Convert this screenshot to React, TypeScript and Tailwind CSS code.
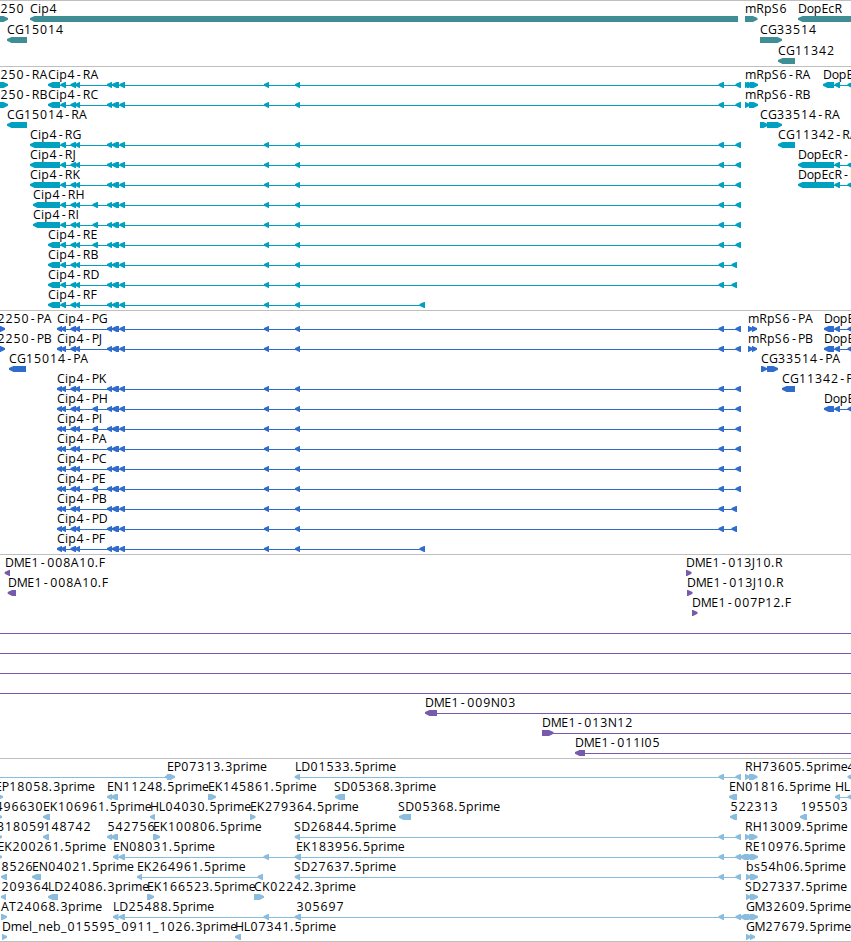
import React from 'react';

type Block = [start: number, end: number, dir?: 'l' | 'r'];

interface Feature {
  label?: string;
  x: number;
  blocks?: Block[];
  line?: [number, number];
}

interface Track {
  name: string;
  color: string;
  laneHeight: number;
  padding: string;
  lanes: Feature[][];
}

// Advance widths of the label face, in pixels (digits are 8)
const ADVANCES: Record<string, number> = {
  '-': 7.8, '.': 4, _: 6,
  A: 8, B: 7.5, C: 8, D: 8.7, E: 6.7, F: 6.5, G: 8.5, H: 8.7, I: 3.3, J: 3.3, K: 7.7,
  L: 6.3, M: 10.5, N: 9, P: 7, R: 7.7, S: 7.3, T: 7,
  b: 8, c: 6.3, e: 7, h: 7.7, i: 3.2, l: 3.2, m: 11.3, n: 7.7, o: 7, p: 7.8, r: 5, s: 6,
};

const glyphPositions = (text: string, x: number) => {
  let pen = x;
  return [...text]
    .map((ch) => {
      const inset = /\d/.test(ch) ? 0.5 : ch === '-' ? 1.8 : 0;
      const position = pen + inset;
      pen += ADVANCES[ch] ?? 8;
      return position.toFixed(1);
    })
    .join(' ');
};

const exons = (first: Block[], extra = false, end = 741): Block[] => [
  ...first,
  [70.5, 76],
  [75, 80],
  ...((extra ? [[92.5, 98]] : []) as Block[]),
  [107, 112],
  [112, 119],
  [119.5, 125],
  [264, 269],
  [295, 300],
  ...((end > 500 ? [[718.5, 724], [end - 5.5, end]] : [[end - 5.5, end]]) as Block[]),
];

const transcript = (label: string, x: number, extra = false, end = 741): Feature => ({
  label,
  x,
  blocks: exons([[x, 60], [60.5, 66]], extra, end),
  line: [60, end],
});

const protein = (label: string, extra = false, end = 741): Feature => ({
  label,
  x: 57,
  blocks: exons([[57, 62], [61, 66]], extra, end),
  line: [60, end],
});

const dopEcR = (label: string, x: number): Feature => ({
  label,
  x,
  blocks: [[x, 834], [834.5, 840], [847.5, 854]],
  line: [834, 851],
});

const one = (label: string, x: number, start: number, end: number, dir: 'l' | 'r' = 'l'): Feature => ({
  label,
  x,
  blocks: [[start, end, dir]],
});

const span = (label: string, x: number): Feature => ({
  label,
  x,
  blocks: [[294.7, 300], [718.5, 724], [735.5, 741]],
  line: [297, 741],
});

const pair = (label: string, x: number, start = x, end = 757.5): Feature => ({
  label,
  x,
  blocks: [[start, start + 5, 'r'], [start + 4, end, 'r']],
});

const spliced = (label: string, x: number): Feature => ({
  label,
  x,
  blocks: [
    [113, 118.5], [119, 125], [263.5, 269], [294.7, 301], [718.5, 724],
    [735.5, 741], [740, 747], [745, 753, 'r'], [750, 758, 'r'],
  ],
  line: [116, 745],
});

const fullLine: Feature = { x: 0, line: [0, 851] };

const tracks: Track[] = [
  {
    name: 'genes',
    color: '#3f8e95',
    laneHeight: 21,
    padding: 'pb-[2px]',
    lanes: [
      [
        one('250', 0, -12, 8, 'r'),
        one('Cip4', 30, 30, 738),
        one('mRpS6', 745, 745, 757.5, 'r'),
        one('DopEcR', 798, 798, 860),
      ],
      [one('CG15014', 7, 7, 27), one('CG33514', 760, 760, 782, 'r')],
      [one('CG11342', 778, 778, 795)],
    ],
  },
  {
    name: 'transcripts',
    color: '#00a0c0',
    laneHeight: 20,
    padding: 'pb-[3px]',
    lanes: [
      [
        one('250-RA', 0, -12, 8, 'r'),
        transcript('Cip4-RA', 48),
        { label: 'mRpS6-RA', x: 745, blocks: [[745, 750, 'r'], [747, 753, 'r'], [750, 758, 'r']] },
        dopEcR('DopEcR-RA', 823),
      ],
      [
        one('250-RB', 0, -12, 8, 'r'),
        transcript('Cip4-RC', 48),
        pair('mRpS6-RB', 745, 745, 758),
      ],
      [
        one('CG15014-RA', 7, 7, 27),
        { label: 'CG33514-RA', x: 760, blocks: [[760, 768, 'r'], [767, 782, 'r']] },
      ],
      [transcript('Cip4-RG', 30), one('CG11342-RA', 778, 778, 795)],
      [transcript('Cip4-RJ', 30), dopEcR('DopEcR-RB', 798)],
      [transcript('Cip4-RK', 30), dopEcR('DopEcR-RC', 798)],
      [transcript('Cip4-RH', 33, true)],
      [transcript('Cip4-RI', 33, true)],
      [transcript('Cip4-RE', 48, true)],
      [transcript('Cip4-RB', 48, false, 737)],
      [transcript('Cip4-RD', 48, false, 737)],
      [transcript('Cip4-RF', 48, false, 425)],
    ],
  },
  {
    name: 'proteins',
    color: '#306ccc',
    laneHeight: 20,
    padding: 'pb-[3px]',
    lanes: [
      [
        one('2250-PA', -3, -12, 5, 'r'),
        protein('Cip4-PG'),
        pair('mRpS6-PA', 748, 748, 757),
        dopEcR('DopEcR-PA', 824),
      ],
      [
        one('2250-PB', -3, -12, 5, 'r'),
        protein('Cip4-PJ'),
        pair('mRpS6-PB', 748, 748, 757),
        dopEcR('DopEcR-PB', 824),
      ],
      [
        one('CG15014-PA', 9, 9, 26),
        { label: 'CG33514-PA', x: 761, blocks: [[761, 767, 'r'], [767, 778, 'r']] },
      ],
      [protein('Cip4-PK'), one('CG11342-PA', 782, 782, 795)],
      [protein('Cip4-PH', true), dopEcR('DopEcR-PC', 824)],
      [protein('Cip4-PI', true)],
      [protein('Cip4-PA')],
      [protein('Cip4-PC')],
      [protein('Cip4-PE', true)],
      [protein('Cip4-PB', false, 737)],
      [protein('Cip4-PD', false, 737)],
      [protein('Cip4-PF', false, 425)],
    ],
  },
  {
    name: 'clones',
    color: '#775aaa',
    laneHeight: 20,
    padding: 'pb-[3px]',
    lanes: [
      [one('DME1-008A10.F', 5, 4.7, 10), one('DME1-013J10.R', 686, 686, 691.5, 'r')],
      [one('DME1-008A10.F', 8, 7.7, 16), one('DME1-013J10.R', 687, 687, 692.5, 'r')],
      [one('DME1-007P12.F', 692, 692, 697.5, 'r')],
      [fullLine],
      [fullLine],
      [fullLine],
      [fullLine],
      [{ label: 'DME1-009N03', x: 425, blocks: [[425, 437]], line: [430, 851] }],
      [{ label: 'DME1-013N12', x: 542, blocks: [[542, 553.5, 'r']], line: [550, 851] }],
      [{ label: 'DME1-011I05', x: 575, blocks: [[575, 585]], line: [580, 851] }],
    ],
  },
  {
    name: 'ests',
    color: '#8abddd',
    laneHeight: 20,
    padding: 'pb-[2px]',
    lanes: [
      [
        { label: 'EP07313.3prime', x: 167, blocks: [[165, 171], [167, 175, 'r']], line: [0, 170] },
        span('LD01533.5prime', 295),
        pair('RH73605.5prime', 745),
        one('4', 847, 847.5, 855),
      ],
      [
        one('EP18058.3prime', -5, -8, 3, 'r'),
        { label: 'EN11248.5prime', x: 107, blocks: [[107, 112], [111, 118]] },
        one('EK145861.5prime', 208, 208, 216, 'r'),
        one('SD05368.3prime', 334, 335, 345),
        one('EN01816.5prime', 729, 729, 737),
        { label: 'HL', x: 835, blocks: [[835, 840], [847.5, 854]], line: [838, 851] },
      ],
      [
        one('496630', -5, -8, 2, 'r'),
        one('EK106961.5prime', 43, 43, 50),
        one('HL04030.5prime', 150, 150, 155),
        one('EK279364.5prime', 250, 250, 255.5, 'r'),
        one('SD05368.5prime', 398, 399, 411),
        one('522313', 730, 730, 737),
        one('195503', 800, 800, 807),
      ],
      [
        one('318059', -3.5, -8, 2, 'r'),
        one('148742', 43, 43, 49),
        { label: '542756', x: 107, blocks: [[107, 112], [111, 118]] },
        one('EK100806.5prime', 153, 153, 160, 'r'),
        span('SD26844.5prime', 294),
        pair('RH13009.5prime', 745),
      ],
      [
        one('EK200261.5prime', -2.5, -8, 2, 'r'),
        spliced('EN08031.5prime', 113),
        { label: 'EK183956.5prime', x: 296 },
        { label: 'RE10976.5prime', x: 745 },
      ],
      [
        one('8526', 1, 1, 7),
        one('EN04021.5prime', 32, 32, 41),
        { label: 'EK264961.5prime', x: 137, blocks: [[137, 142], [257.5, 263]], line: [140, 260] },
        span('SD27637.5prime', 294),
        pair('bs54h06.5prime', 746, 746, 758),
      ],
      [
        one('209364', 1, 1, 6),
        one('LD24086.3prime', 48, 48, 58),
        one('EK166523.5prime', 147, 147, 154, 'r'),
        one('CK02242.3prime', 254, 254, 264, 'r'),
        pair('SD27337.5prime', 745, 746, 758),
      ],
      [
        one('AT24068.3prime', 1, 1, 7, 'r'),
        spliced('LD25488.5prime', 113),
        { label: '305697', x: 296 },
        { label: 'GM32609.5prime', x: 746 },
      ],
      [
        one('Dmel_neb_015595_0911_1026.3prime', 2, 2, 7, 'r'),
        one('HL07341.5prime', 235, 235, 241),
        pair('GM27679.5prime', 746, 746, 755),
      ],
    ],
  },
];

const TIP = 4.5;

// Arrow heads end in a blunt two pixel nose
const arrowPoints = ([start, end, dir = 'l']: Block) =>
  dir === 'l'
    ? `${start},17 ${start + TIP},15 ${end},15 ${end},21 ${start + TIP},21 ${start},18.8`
    : `${end},17 ${end - TIP},15 ${start},15 ${start},21 ${end - TIP},21 ${end},18.8`;

const Lane: React.FC<{ features: Feature[]; color: string; height: number }> = ({ features, color, height }) => (
  <svg width="851" height={height} className="block shrink-0 overflow-visible" fill={color}>
    {features.map((feature, index) => (
      <g key={index}>
        {feature.line && (
          <rect x={feature.line[0]} y="18" width={feature.line[1] - feature.line[0]} height="1" />
        )}
        {feature.blocks?.map((block, i) => (
          <polygon key={i} points={arrowPoints(block)} />
        ))}
        {feature.label && (
          <text x={glyphPositions(feature.label, feature.x)} y="12" className="fill-black text-[12.3px]">
            {feature.label}
          </text>
        )}
      </g>
    ))}
  </svg>
);

export default function App() {
  return (
    <main className="flex h-[942px] w-[851px] flex-col overflow-hidden border-b border-[#bfbfbf] bg-white font-['Open_Sans','Noto_Sans',sans-serif]">
      {tracks.map((track) => (
        <section key={track.name} className={`flex flex-col border-t border-[#bfbfbf] ${track.padding}`}>
          {track.lanes.map((features, index) => (
            <Lane key={index} features={features} color={track.color} height={track.laneHeight} />
          ))}
        </section>
      ))}
    </main>
  );
}
